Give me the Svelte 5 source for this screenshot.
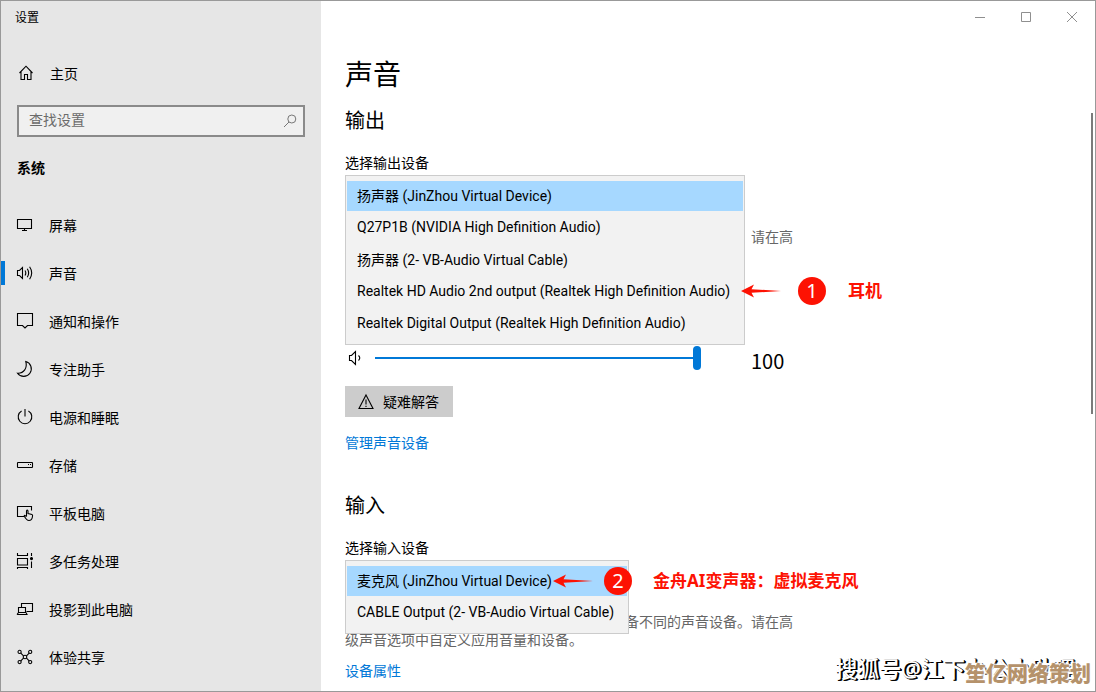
<script lang="ts">
  type NavItem = { label: string; icon: string };

  const navItems: NavItem[] = [
    { label: '屏幕', icon: 'display' },
    { label: '声音', icon: 'sound' },
    { label: '通知和操作', icon: 'notify' },
    { label: '专注助手', icon: 'moon' },
    { label: '电源和睡眠', icon: 'power' },
    { label: '存储', icon: 'storage' },
    { label: '平板电脑', icon: 'tablet' },
    { label: '多任务处理', icon: 'multitask' },
    { label: '投影到此电脑', icon: 'project' },
    { label: '体验共享', icon: 'share' }
  ];

  const outputs = [
    '扬声器 (JinZhou Virtual Device)',
    'Q27P1B (NVIDIA High Definition Audio)',
    '扬声器 (2- VB-Audio Virtual Cable)',
    'Realtek HD Audio 2nd output (Realtek High Definition Audio)',
    'Realtek Digital Output (Realtek High Definition Audio)'
  ];

  const inputs = [
    '麦克风 (JinZhou Virtual Device)',
    'CABLE Output (2- VB-Audio Virtual Cable)'
  ];

  const hint =
    '某些应用可能已设置为使用与此处所选择的设备不同的声音设备。请在高级声音选项中自定义应用音量和设备。';

  let active = $state('声音');
  let output = $state(outputs[0]);
  let input = $state(inputs[0]);
  let volume = $state(100);
</script>

{#snippet note(num: number, text: string)}
  <svg class="arrow" width="40" height="14" viewBox="0 0 40 14" aria-hidden="true">
    <path d="M0 7 L13 0.5 L10.5 5.2 L40 7 L10.5 8.8 L13 13.5 Z" fill="#fd1203" />
  </svg>
  <span class="badge">{num}</span>
  <strong>{text}</strong>
{/snippet}

<div class="window">
  <aside class="sidebar">
    <div class="app-title">设置</div>
    <button class="home">
      <svg class="icon" viewBox="0 0 18 18" aria-hidden="true">
        <path d="M2.5 9 L9 2.2 L15.5 9 M4 7.5 V15.5 H7.5 V10.5 H10.5 V15.5 H14 V7.5" />
      </svg>
      主页
    </button>
    <div class="search">
      <input type="text" placeholder="查找设置" aria-label="查找设置" />
      <svg width="14" height="14" viewBox="0 0 14 14" aria-hidden="true">
        <circle cx="8.8" cy="5" r="4" />
        <path d="M6 8 L1 13" />
      </svg>
    </div>
    <h2 class="group">系统</h2>
    <nav>
      {#each navItems as item}
        <button class="nav-item" class:active={active === item.label} onclick={() => (active = item.label)}>
          <svg class="icon" viewBox="0 0 18 18" aria-hidden="true">
            {#if item.icon === 'display'}
              <path d="M1.5 3.5 H15.5 V12.5 H1.5 Z M8.5 12.5 V14 M6 14.5 H11" />
            {:else if item.icon === 'sound'}
              <path d="M1.5 6.5 H3.5 L6.5 3.5 V14.5 L3.5 11.5 H1.5 Z M9 6.5 Q10.6 9 9 11.5 M11.3 4.8 Q14 9 11.3 13.2 M13.6 2.8 Q17.8 9 13.6 15.2" />
            {:else if item.icon === 'notify'}
              <path d="M1.5 1.5 H16.5 V13.5 H11.5 L9 16 L6.5 13.5 H1.5 Z" />
            {:else if item.icon === 'moon'}
              <path d="M9.8 1.5 A7.6 7.6 0 1 1 1.5 13.2 C8 13.5 11.5 8 9.8 1.5 Z" />
            {:else if item.icon === 'power'}
              <path d="M5.6 3 A6.8 6.8 0 1 0 12.4 3 M9 1 V8.5" />
            {:else if item.icon === 'storage'}
              <rect x="1.5" y="6.5" width="15" height="5" rx="0.6" />
              <path d="M12 8.5 H13 M14 8.5 H15" />
            {:else if item.icon === 'tablet'}
              <path d="M8 12.5 H1.5 V2.5 H15.5 V6.5" />
              <path d="M10.5 12.5 V7 Q11.2 5 12 7 V9.5 L16 10.5 Q17 11 16.4 13 Q15.8 16.5 13 16.5 Q10.5 16.5 8.2 12 Q8.6 10.6 10.5 12.5" />
            {:else if item.icon === 'multitask'}
              <path d="M1.5 1 V3.5 H11.5 V1 M1.5 6.5 H11.5 V13 H1.5 Z M1.5 17 V15.5 H11.5 V17 M15.5 1 V4 M15.5 9.5 V16" />
              <circle cx="15.5" cy="6.6" r="1" fill="#000" />
            {:else if item.icon === 'project'}
              <path d="M5.5 7 V3.5 H16.5 V11.5 H10.5 M2.5 7.5 H9.5 V12.5 H2.5 Z M1 14.5 H11 L10 12.5 M1 14.5 L2.5 12.5" />
            {:else}
              <path d="M4.6 4.9 L7.5 7.8 M13.4 4.9 L10.5 7.8 M4.6 13.1 L7.5 10.2 M13.4 13.1 L10.5 10.2" />
              <circle cx="3.6" cy="3.9" r="1.6" />
              <circle cx="14.2" cy="3.9" r="1.6" />
              <circle cx="3.6" cy="14.1" r="1.6" />
              <circle cx="14.2" cy="14.1" r="1.6" />
              <circle cx="9" cy="9" r="1.8" />
            {/if}
          </svg>
          {item.label}
        </button>
      {/each}
    </nav>
  </aside>

  <main>
    <h1>声音</h1>

    <section>
      <h2>输出</h2>
      <label for="output">选择输出设备</label>
      <div class="picker">
        <select id="output" size="5" bind:value={output}>
          {#each outputs as device}
            <option value={device}>{device}</option>
          {/each}
        </select>
        <div class="note note-output">{@render note(1, '耳机')}</div>
      </div>
      <p class="hint">{hint}</p>
      <div class="volume">
        <svg class="icon" viewBox="0 0 18 18" aria-hidden="true">
          <path d="M4.5 6.5 H6.5 L10.5 2.5 V15.5 L6.5 11.5 H4.5 Z M13.5 6.5 Q16 9 13.5 11.5" />
        </svg>
        <input type="range" min="0" max="100" bind:value={volume} aria-label="主音量" />
        <output>{volume}</output>
      </div>
      <button class="troubleshoot">
        <svg class="icon" viewBox="0 0 18 18" aria-hidden="true">
          <path d="M9 2 L16 15.5 H2 Z M9 6.5 V11.5 M9 12.8 V14" />
        </svg>
        疑难解答
      </button>
      <a href="#devices">管理声音设备</a>
    </section>

    <section>
      <h2>输入</h2>
      <label for="input">选择输入设备</label>
      <div class="picker">
        <select id="input" size="2" bind:value={input}>
          {#each inputs as device}
            <option value={device}>{device}</option>
          {/each}
        </select>
        <div class="note note-input">{@render note(2, '金舟AI变声器：虚拟麦克风')}</div>
      </div>
      <p class="hint">{hint}</p>
      <a href="#properties">设备属性</a>
    </section>
  </main>

  <div class="caption">
    <button aria-label="最小化"><svg width="10" height="10" viewBox="0 0 10 10"><path d="M0 5.5 H10" /></svg></button>
    <button aria-label="最大化"><svg width="10" height="10" viewBox="0 0 10 10"><path d="M0.5 0.5 H9.5 V9.5 H0.5 Z" /></svg></button>
    <button aria-label="关闭"><svg width="10" height="10" viewBox="0 0 10 10"><path d="M0 0 L10 10 M10 0 L0 10" /></svg></button>
  </div>
  <div class="scroll-thumb"></div>

  <div class="mark mark-source">搜狐号@江下办公小助理</div>
  <div class="mark mark-site">笙亿网络策划</div>
</div>

<style>
  :global(body) {
    overflow: hidden;
  }

  .window {
    position: relative;
    display: flex;
    height: 100vh;
    box-sizing: border-box;
    overflow: hidden;
    border: 1px solid #999;
    background: #fff;
    color: #000;
    font-family: 'Noto Sans', 'Noto Sans CJK SC', sans-serif;
    font-size: 14px;
    line-height: 20px;
  }

  button,
  input,
  select {
    font: inherit;
    color: inherit;
    border: none;
    border-radius: 0;
    outline: none;
  }

  h1,
  h2,
  p {
    margin: 0;
    font-weight: 400;
  }

  svg {
    flex: none;
    fill: none;
    stroke: currentColor;
    stroke-width: 1;
  }

  .icon {
    width: 18px;
    height: 18px;
    stroke-width: 1.1;
  }

  /* sidebar */
  .sidebar {
    flex: none;
    width: 320px;
    box-sizing: border-box;
    background: #e6e6e6;
    font-family: 'Noto Sans CJK SC', sans-serif;
  }

  .app-title {
    padding: 6px 14px;
    font-size: 12px;
  }

  .home,
  .nav-item {
    display: flex;
    align-items: center;
    gap: 15px;
    width: 100%;
    padding: 0 15px;
    background: none;
    text-align: left;
  }

  .home {
    height: 40px;
    margin-top: 20px;
    padding: 0 16px;
  }

  .search {
    display: flex;
    align-items: center;
    height: 32px;
    box-sizing: border-box;
    margin: 12px 16px 20px;
    padding: 0 6px 0 10px;
    border: 2px solid #8a8a8a;
    background: #f0f0f0;
    color: #777;
  }

  .search input {
    flex: 1;
    min-width: 0;
    padding: 0 0 4px;
    background: none;
  }

  .search input::placeholder {
    color: #6b6b6b;
  }

  .group {
    margin: 0 16px 24px;
    font-size: 14px;
    font-weight: 700;
  }

  .nav-item {
    height: 48px;
  }

  .nav-item.active {
    background: linear-gradient(#0078d7, #0078d7) left center / 4px 24px no-repeat;
  }

  /* content */
  main {
    flex: 1;
    min-width: 0;
    padding: 55px 24px 0;
  }

  h1 {
    font-size: 28px;
    line-height: 36px;
  }

  main h2 {
    margin: 15px 0 18px;
    font-size: 20px;
    line-height: 28px;
  }

  section + section {
    margin-top: 39px;
  }

  label,
  a {
    display: block;
    width: fit-content;
  }

  a {
    color: #0078d7;
    text-decoration: none;
  }

  .picker {
    position: relative;
    width: fit-content;
    height: 32px;
    margin: 2px 0 21px;
  }

  select {
    position: relative;
    z-index: 1;
    display: block;
    appearance: none;
    height: auto;
    padding: 5px 1px 3px;
    border: 1px solid #ccc;
    background: #f2f2f2;
    font-family: Roboto, 'Noto Sans CJK SC', sans-serif;
    overflow: hidden;
  }

  option {
    display: flex;
    align-items: center;
    height: 32px;
    box-sizing: border-box;
    padding: 0 13px 2px 10px;
    border-bottom: 2px solid #f2f2f2;
    color: #000;
  }

  option:checked {
    background: linear-gradient(#a6d8ff, #a6d8ff);
    color: #000;
  }

  .hint {
    max-width: 450px;
    line-height: 18px;
    color: #666;
  }

  .hint + a {
    margin-top: 12px;
  }

  .volume {
    display: flex;
    align-items: center;
    height: 24px;
    margin: 82px 0 16px;
  }

  .volume input {
    appearance: none;
    width: 326px;
    height: 24px;
    margin: 0 50px 0 12px;
    background: linear-gradient(#0078d7, #0078d7) center / 100% 2px no-repeat;
  }

  .volume input::-webkit-slider-thumb {
    appearance: none;
    width: 8px;
    height: 24px;
    border-radius: 4px;
    background: #0078d7;
  }

  .volume output {
    padding-top: 6px;
    font-family: 'Noto Sans CJK SC', sans-serif;
    font-size: 20px;
  }

  .troubleshoot {
    display: flex;
    align-items: center;
    gap: 8px;
    height: 31px;
    margin-bottom: 16px;
    padding: 0 14px 0 12px;
    background: #ccc;
  }

  /* red callouts beside the lists */
  .note {
    position: absolute;
    z-index: 2;
    display: flex;
    align-items: center;
    color: #fd1203;
    font-size: 17px;
    white-space: nowrap;
  }

  .note-output {
    top: 102px;
    left: 396px;
    gap: 17px;
  }

  .note-input {
    top: 7px;
    left: 208px;
    gap: 11px;
  }

  .note strong {
    margin-left: 5px;
  }

  .note-input strong {
    margin-left: 10px;
  }

  .arrow {
    stroke: none;
  }

  .badge {
    width: 28px;
    height: 28px;
    border-radius: 50%;
    background: #fd1203;
    color: #fff;
    font-size: 20px;
    line-height: 28px;
    text-align: center;
  }

  /* window chrome */
  .caption {
    position: absolute;
    top: 0;
    right: 0;
    display: flex;
  }

  .caption button {
    display: flex;
    align-items: center;
    justify-content: center;
    width: 46px;
    height: 32px;
    padding: 0;
    background: none;
    color: #8f8f8f;
  }

  .scroll-thumb {
    position: absolute;
    top: 112px;
    right: 2px;
    width: 2px;
    height: 301px;
    background: #7a7a7a;
  }

  .mark {
    position: absolute;
    white-space: nowrap;
    line-height: 28px;
  }

  .mark-source {
    right: 20px;
    bottom: 9px;
    color: #fff;
    font-size: 22px;
    font-weight: 500;
    text-shadow: 1px 1px 0 #000, 1px 0 0 #000, 2px 1px 0 #000;
  }

  .mark-site {
    right: 4px;
    bottom: 4px;
    color: #b5926b;
    font-size: 21px;
    font-weight: 900;
    text-shadow: 0 0 2px #fff, 0 0 2px #fff, 0 0 2px #fff, 0 0 3px #fff, 0 0 3px #fff;
  }
</style>
